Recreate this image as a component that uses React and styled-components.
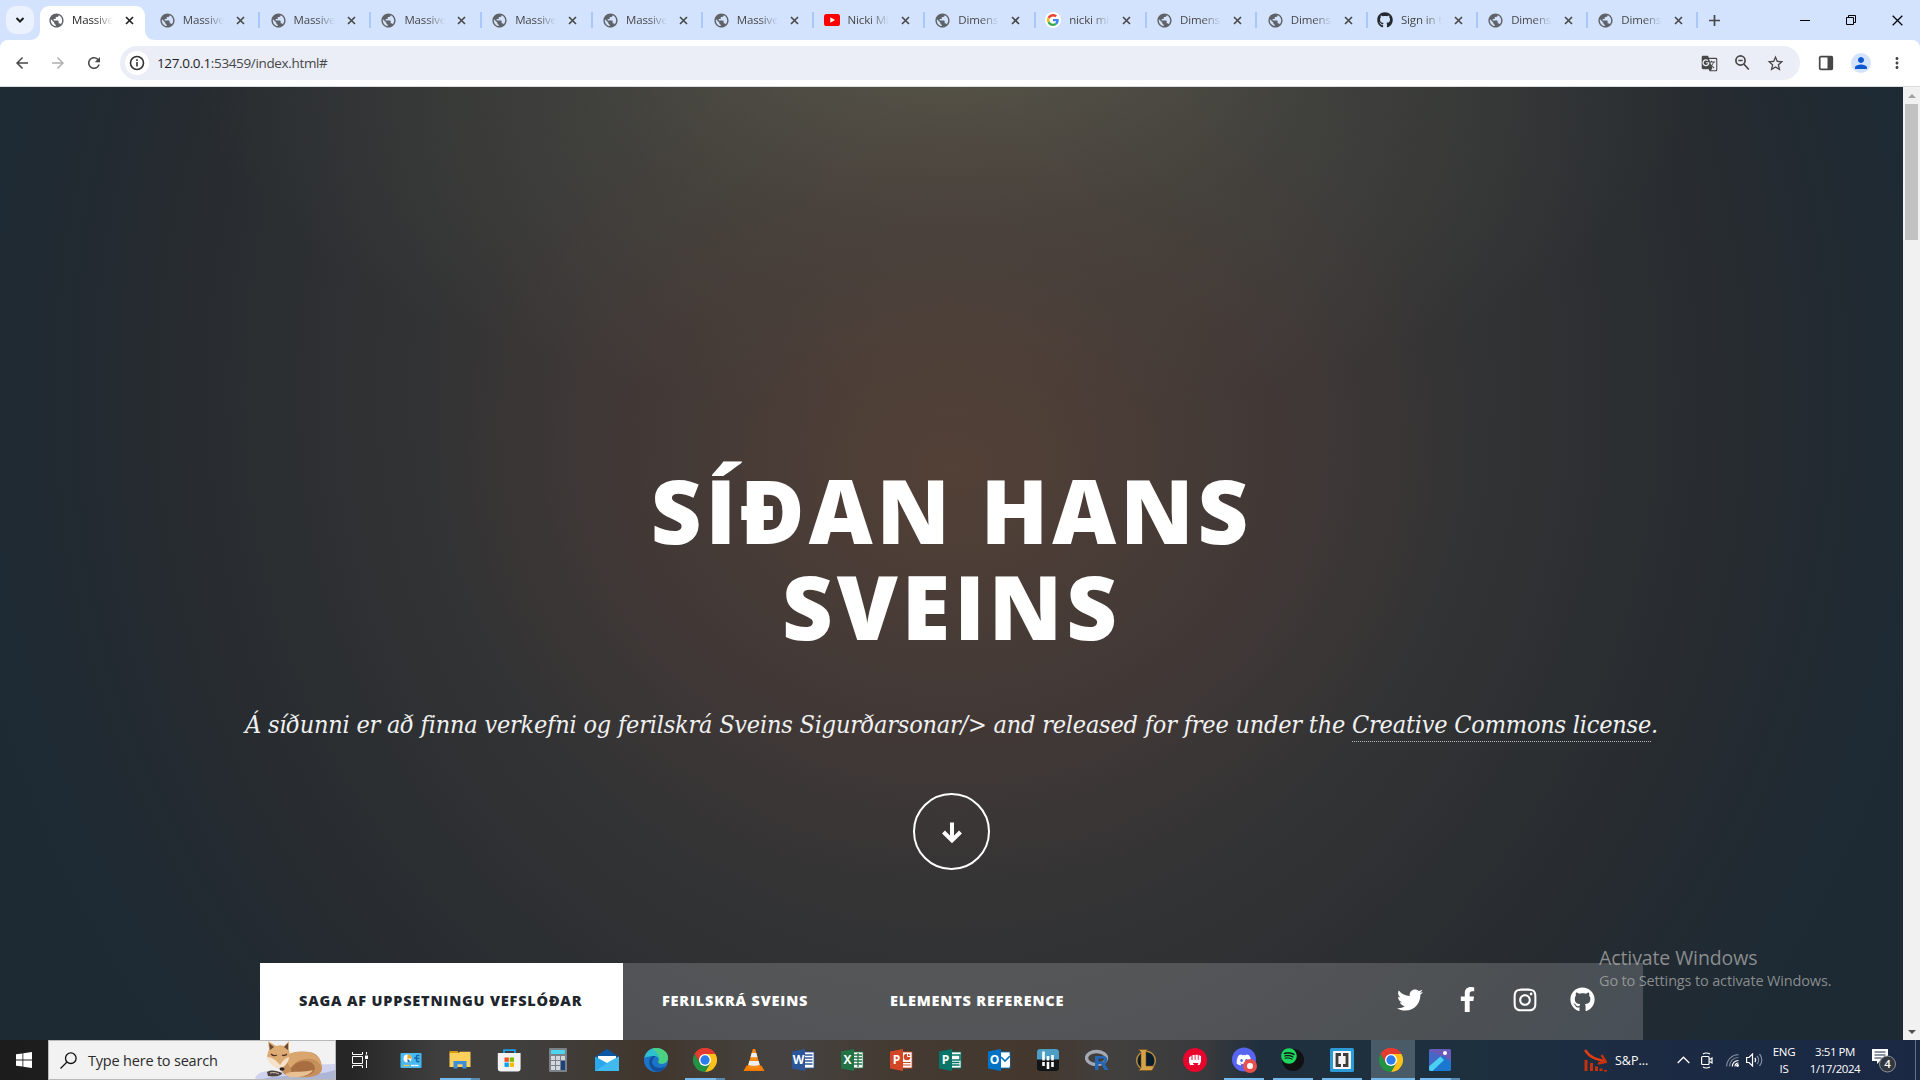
import React from "react";
import styled, { createGlobalStyle } from "styled-components";
import { FaTwitter, FaFacebookF, FaInstagram, FaGithub, FaSpotify, FaDiscord } from "react-icons/fa";
import {
  MdPublic, MdArrowBack, MdArrowForward, MdRefresh, MdGTranslate, MdStarBorder, MdPerson, MdMoreVert,
} from "react-icons/md";

const ui = `"Open Sans", "Noto Sans", sans-serif`;

const Global = createGlobalStyle`
  * { box-sizing: border-box; }
  html, body { margin: 0; padding: 0; overflow: hidden; }
  svg { display: block; flex: none; }
`;

const Screen = styled.div`
  width: 1920px;
  height: 1080px;
  display: flex;
  flex-direction: column;
  overflow: hidden;
  font-family: ${ui};
`;

/* ---------- Tab strip ---------- */
const TabStrip = styled.div`
  height: 40px;
  flex: none;
  display: flex;
  align-items: stretch;
  background: #d3e3fd;
  padding-left: 6px;
`;
const TabSearch = styled.div`
  width: 28px;
  height: 28px;
  margin: 6px 3.6px 0 0;
  border-radius: 10px;
  background: #ebf2fe;
  display: grid;
  place-items: center;
`;
const Tab = styled.div`
  position: relative;
  width: ${(p) => p.$w || 110.7}px;
  flex: none;
  display: flex;
  align-items: center;
  padding: 0 0 0 11.4px;
  color: ${(p) => (p.$active ? "#1f1f1f" : "#474747")};
  z-index: 0;
  ${(p) => p.$sep && `
    &::after {
      content: "";
      position: absolute;
      right: -1px;
      top: 12px;
      width: 2px;
      height: 16px;
      background: #a8c7fa;
    }
  `}
`;
const ActiveShape = styled.svg`
  position: absolute;
  left: -7.6px;
  top: 6px;
  z-index: -1;
`;
const Favicon = styled.div`
  width: 16px;
  height: 16px;
  margin-left: -1px;
  flex: none;
  display: grid;
  place-items: center;
  border-radius: 50%;
  background: ${(p) => p.$bg || "transparent"};
`;
const TabTitle = styled.div`
  width: 41px;
  margin-left: 8px;
  overflow: hidden;
  white-space: nowrap;
  font-size: 11.5px;
  line-height: 18px;
  letter-spacing: -0.15px;
  mask-image: linear-gradient(90deg, #000 55%, transparent 100%);
`;
const CloseX = styled.svg`
  margin-left: 12px;
`;
const NewTab = styled.svg`
  margin: 15px 0 0 12px;
`;
const WindowButtons = styled.div`
  margin-left: auto;
  display: flex;
  align-items: center;
  gap: 36px;
  padding-right: 17px;
`;

/* ---------- Toolbar ---------- */
const ToolbarWrap = styled.div`
  height: 47px;
  flex: none;
  background: #d3e3fd;
`;
const Toolbar = styled.div`
  height: 47px;
  display: flex;
  align-items: center;
  background: #fff;
  border-radius: 8px 8px 0 0;
  border-bottom: 1px solid #dadce0;
  padding: 0 12px 0 13px;
  color: #474747;
`;
const NavButtons = styled.div`
  display: flex;
  gap: 18px;
  width: 107px;
  flex: none;
`;
const Omnibox = styled.div`
  width: 1680px;
  height: 34px;
  border-radius: 17px;
  background: #ebeef7;
  display: flex;
  align-items: center;
  padding: 0 15px 0 5px;
`;
const SiteInfo = styled.div`
  width: 24px;
  height: 24px;
  border-radius: 50%;
  background: #fff;
  display: grid;
  place-items: center;
`;
const Url = styled.div`
  flex: 1;
  margin-left: 8px;
  font-size: 13.5px;
  letter-spacing: ${(p) => p.$ls}px;
  line-height: 20px;
  color: #474747;
  white-space: nowrap;
`;
const Host = styled.span`
  color: #1f1f1f;
`;
const OmniActions = styled.div`
  display: flex;
  align-items: center;
  gap: 15px;
`;
const Avatar = styled.div`
  width: 20px;
  height: 20px;
  border-radius: 50%;
  background: #d3e3fd;
  color: #0b57d0;
  display: grid;
  place-items: center;
`;
const ToolbarEnd = styled.div`
  display: flex;
  align-items: center;
  gap: 17px;
  padding-left: 18px;
`;

/* ---------- Page ---------- */
const Viewport = styled.div`
  height: 953px;
  flex: none;
  display: flex;
`;
const Hero = styled.main`
  width: 1903px;
  height: 953px;
  display: flex;
  flex-direction: column;
  align-items: center;
  overflow: hidden;
  background:
    radial-gradient(ellipse 520px 420px at 50% 40%, rgba(96, 68, 52, 0.6), rgba(84, 60, 52, 0.32) 55%, transparent 100%),
    radial-gradient(ellipse 760px 360px at 50% -3%, rgba(96, 94, 78, 0.75), rgba(78, 80, 70, 0.42) 50%, transparent 100%),
    radial-gradient(ellipse 1000px 1050px at 50% 32%, #403c3a 0%, #3a3737 35%, #2f3133 60%, #262b30 80%, #1d2a34 100%);
`;
const Title = styled.h1`
  margin: 375px 0 0;
  font-family: "Open Sans", "Noto Sans", sans-serif;
  font-weight: 800;
  font-size: 88px;
  line-height: 96px;
  text-align: center;
  color: #fff;
  text-transform: uppercase;
`;
const TitleLine = styled.div`
  letter-spacing: ${(p) => p.$ls}px;
  white-space: nowrap;
`;
const Tagline = styled.p`
  margin: 49px 0 0;
  font-family: "DejaVu Serif Condensed", "DejaVu Serif", serif;
  font-stretch: condensed;
  font-style: italic;
  font-size: 25px;
  letter-spacing: -0.2px;
  line-height: 44px;
  white-space: nowrap;
  color: #f0f0f0;
`;
const License = styled.a`
  border-bottom: 1px dotted rgba(255, 255, 255, 0.65);
  padding-bottom: 2px;
`;
const ArrowButton = styled.div`
  margin-top: 46px;
  width: 77px;
  height: 77px;
  flex: none;
  border: 2px solid #fff;
  border-radius: 50%;
  display: grid;
  place-items: center;
`;
const NavBar = styled.nav`
  margin-top: auto;
  width: 1383px;
  height: 77px;
  flex: none;
  display: flex;
  background: rgba(255, 255, 255, 0.175);
`;
const NavItem = styled.a`
  width: ${(p) => p.$w}px;
  padding-left: 39px;
  line-height: 75px;
  font-weight: 800;
  font-size: 14.5px;
  letter-spacing: ${(p) => p.$ls}px;
  text-transform: uppercase;
  white-space: nowrap;
  color: ${(p) => (p.$active ? "#1e252d" : "#fff")};
  background: ${(p) => (p.$active ? "#fff" : "transparent")};
`;
const Social = styled.div`
  margin-left: auto;
  display: flex;
  align-items: center;
  padding: 0 48px 4px 0;
  color: #fff;
`;
const SocialIcon = styled.div`
  width: ${(p) => p.$w || 57.5}px;
  display: flex;
  justify-content: center;
`;
const Watermark = styled.div`
  position: absolute;
  left: 1599px;
  top: 944px;
  color: rgba(170, 170, 170, 0.78);
  white-space: nowrap;
`;
const WatermarkTitle = styled.div`
  font-size: 19.5px;
  line-height: 28px;
  letter-spacing: -0.1px;
`;
const WatermarkText = styled.div`
  font-size: 14.5px;
  line-height: 18px;
  letter-spacing: -0.15px;
`;

const Scrollbar = styled.div`
  width: 17px;
  height: 953px;
  background: #f1f1f1;
  display: flex;
  flex-direction: column;
  align-items: center;
`;
const ScrollArrow = styled.div`
  height: 17px;
  width: 17px;
  display: grid;
  place-items: center;
  color: ${(p) => p.$c};
`;
const Thumb = styled.div`
  width: 13px;
  height: 136px;
  background: #c1c1c1;
  margin-bottom: auto;
`;

/* ---------- Taskbar ---------- */
const Taskbar = styled.footer`
  height: 40px;
  flex: none;
  display: flex;
  background: linear-gradient(90deg, #1c1c1c 0, #262626 350px, #403f3f 440px, #403f3e 520px, #41362d 650px,
    #454341 780px, #443a32 890px, #44382e 1040px, #42403f 1110px, #393a3c 1205px, #1f2f3e 1262px,
    #1d303e 1480px, #1c2b42 1620px, #1a2844 1920px);
`;
const StartButton = styled.div`
  width: 48px;
  display: grid;
  place-items: center;
`;
const SearchBox = styled.div`
  width: 288px;
  border: 1px solid #b9b9b9;
  background: #f2f2f2;
  display: flex;
  align-items: center;
  padding-left: 11px;
  overflow: hidden;
`;
const SearchText = styled.div`
  margin-left: 11px;
  width: 167px;
  flex: none;
  font-size: 14.5px;
  letter-spacing: ${(p) => p.$ls}px;
  color: #2b2b2b;
  white-space: nowrap;
`;
const TaskView = styled.div`
  width: 50.5px;
  padding-left: 16px;
  display: flex;
  align-items: center;
`;
const AppButton = styled.div`
  width: 49px;
  flex: none;
  display: grid;
  place-items: center;
  border-bottom: 2px solid transparent;
  padding-top: 2px;
  position: relative;
  background: ${(p) => (p.$active ? "linear-gradient(90deg, transparent 4px, #4a5b68 4px, #4a5b68 48px, transparent 48px)" : "transparent")};
`;
const Running = styled.div`
  position: absolute;
  left: ${(p) => (p.$active ? 4 : 4.5)}px;
  bottom: -2px;
  width: ${(p) => (p.$active ? 44 : 40)}px;
  height: 2px;
  background: ${(p) => (p.$split ? "linear-gradient(90deg, #76b9ed 31px, #5a8ab0 31px)" : "#76b9ed")};
`;
const Tray = styled.div`
  margin-left: auto;
  width: 336px;
  display: flex;
  align-items: center;
  color: #fff;
`;
const TrayCell = styled.div`
  width: ${(p) => p.$w}px;
  flex: none;
  display: flex;
  flex-direction: column;
  align-items: ${(p) => p.$align || "flex-start"};
  font-size: ${(p) => p.$size || 12}px;
  line-height: 17px;
  letter-spacing: ${(p) => p.$ls || 0}px;
  white-space: nowrap;
`;
const ShowDesktop = styled.div`
  width: 5px;
  height: 40px;
  margin-left: auto;
  border-left: 1px solid #66748a;
`;

/* ---------- Drawings ---------- */
const Chrome = ({ s = 24 }) => (
  <svg width={s} height={s} viewBox="0 0 48 48">
    <path d="M24 24 3.2 12A24 24 0 0 1 44.8 12z" fill="#ea4335" />
    <path d="M24 0A24 24 0 0 1 44.8 12H24L13.6 30 3.2 12A24 24 0 0 1 24 0z" fill="#e33b2e" />
    <path d="M44.8 12A24 24 0 0 1 24 48L34.4 30 24 12z" fill="#fbc116" />
    <path d="M3.2 12A24 24 0 0 0 24 48L34.4 30H13.6z" fill="#229342" />
    <circle cx="24" cy="24" r="12" fill="#fff" />
    <circle cx="24" cy="24" r="9.3" fill="#2b7de9" />
  </svg>
);
const Google = () => (
  <svg width="12" height="12" viewBox="0 0 48 48">
    <path fill="#EA4335" d="M24 9.5c3.5 0 6.700 1.200 9.200 3.600l6.900-6.900C35.900 2.400 30.500 0 24 0 14.600 0 6.500 5.400 2.600 13.200l8 6.200C12.400 13.700 17.700 9.500 24 9.500z" />
    <path fill="#4285F4" d="M47 24.600c0-1.600-.2-3.100-.4-4.600H24v9h12.900c-.6 3-2.200 5.500-4.800 7.200l7.700 6C44.400 38 47 32 47 24.600z" />
    <path fill="#FBBC05" d="M10.500 28.600a14.500 14.500 0 0 1 0-9.200l-8-6.200a24 24 0 0 0 0 21.600z" />
    <path fill="#34A853" d="M24 48c6.500 0 11.900-2.100 15.900-5.800l-7.700-6c-2.200 1.500-4.900 2.300-8.200 2.300-6.300 0-11.600-4.200-13.500-9.900l-8 6.200C6.500 42.600 14.600 48 24 48z" />
  </svg>
);
const YouTube = () => (
  <svg width="16" height="12" viewBox="0 0 16 12">
    <rect width="16" height="12" rx="2.600" fill="#f00" />
    <path d="M6.300 3.300v5.400L11 6z" fill="#fff" />
  </svg>
);
const Cross = ({ s = 8, w = 1.6, c = "currentColor" }) => (
  <svg width={s} height={s} viewBox="0 0 8 8"><path d="M.5.500l7 7M7.500.5l-7 7" stroke={c} strokeWidth={w} /></svg>
);

const OfficeIcon = ({ letter, color, dark, kind }) => (
  <svg width="24" height="24" viewBox="0 0 24 24">
    <rect x="12" y="4" width="11" height="16" fill="#fff" stroke={color} strokeWidth=".8" />
    {kind === "lines" && <path d="M14 7h7.500M14 10h7.500M14 13h7.500M14 16h7.500" stroke={color} strokeWidth="1.400" />}
    {kind === "grid" && <path d="M14 7h8M14 10h8M14 13h8M14 16h8M18 5v14" stroke={color} strokeWidth="1.300" />}
    {kind === "chart" && <><circle cx="18" cy="9" r="3.300" fill={color} /><path d="M18.500 5v3.500H22M14 15h7.500M14 17.500h7.500" stroke="#fff" strokeWidth="1" fill="none" /><path d="M14 14.500h7.500M14 17h7.500" stroke={color} strokeWidth="1.200" /></>}
    {kind === "pub" && <path d="M14 7h8v5h-8M14 14.500h7.500M14 17h7.500" stroke={color} strokeWidth="1.500" fill="none" />}
    {kind === "mail" && <><path d="M13 7h10v11H13z" fill="#fff" /><path d="M14 9l4 4 5-5" stroke={color} strokeWidth="1.600" fill="none" /></>}
    <path d="M1 3.500 14 1v22L1 20.500z" fill={dark} />
    <text x="7.500" y="16.300" fill="#fff" fontFamily="Open Sans, sans-serif" fontWeight="700" fontSize="12" textAnchor="middle">{letter}</text>
  </svg>
);

const Svg = ({ children }) => <svg width="24" height="24" viewBox="0 0 24 24">{children}</svg>;

const Panel = () => (
  <Svg>
    <rect x="1.500" y="5" width="21" height="15" rx="1" fill="#49b9f2" />
    <circle cx="8.500" cy="10.500" r="4" fill="#fff" /><path d="M8.500 10.500V6.500a4 4 0 0 1 4 4z" fill="#f5a623" />
    <path d="M8.500 10.500l2.800 2.800A4 4 0 0 1 8.500 14.500z" fill="#2474b8" />
    <path d="M15 10h2.500M17.500 7.500h3M17.500 10.500h3M17.500 13.500h3M17.500 7.500v6" stroke="#1467a8" strokeWidth="1.400" fill="none" />
    <path d="M4.500 17.500h6" stroke="#f5c443" strokeWidth="1.300" /><path d="M12 17.500h7.500" stroke="#fff" strokeWidth="1.300" />
  </Svg>
);
const Explorer = () => (
  <Svg>
    <path d="M1.500 3h8l1.500 2.500h-9.500z" fill="#d99a0b" />
    <path d="M1.500 5h9l1.500-1.200h10.500V19h-21z" fill="#ffd15c" />
    <path d="M5.500 20.500v-7.500h13v7.500h-4v-4.200h-5v4.200z" fill="#3c8fd9" />
  </Svg>
);
const Store = () => (
  <Svg>
    <path d="M7 6V2.200h11V6" fill="none" stroke="#1fa0ea" strokeWidth="1.800" />
    <path d="M.8 5h22.800v15.500a3 3 0 0 1-3 3H3.800a3 3 0 0 1-3-3z" fill="#f3f3f3" />
    <rect x="7.500" y="9.500" width="4.300" height="4.300" fill="#f25022" /><rect x="12.700" y="9.500" width="4.300" height="4.300" fill="#7fba00" />
    <rect x="7.500" y="14.600" width="4.300" height="4.300" fill="#00a4ef" /><rect x="12.700" y="14.600" width="4.300" height="4.300" fill="#ffb900" />
  </Svg>
);
const Calculator = () => (
  <Svg>
    <rect x="3" y="0" width="18" height="24" rx="1" fill="#7b8189" />
    <rect x="5" y="2" width="14" height="4" fill="#4fd4ef" />
    {[8, 13, 18].map((y) => [5, 10].map((x) => <rect key={x + "-" + y} x={x} y={y} width="4" height="4" fill="#d4d8dc" />))}
    <rect x="15" y="8" width="4" height="4" fill="#d4d8dc" /><rect x="15" y="13" width="4" height="9" fill="#18437e" />
  </Svg>
);
const Mail = () => (
  <Svg>
    <path d="M0 9 12 .8 24 9v3H0z" fill="#0b57a3" />
    <path d="M3 8h18v9H3z" fill="#fff" />
    <path d="M0 8.500 12 15 24 8.500V23H0z" fill="#2aa7ec" /><path d="M0 23 15.500 13 24 8.500V23z" fill="#4cc2f5" opacity=".7" />
  </Svg>
);
const Edge = () => (
  <Svg>
    <circle cx="12" cy="12" r="12" fill="#1c74c8" />
    <path d="M.4 10C1.500 4 6 0 12 0c7 0 12 4.500 12 9.800 0 3.700-2.700 6-6.200 6-2.500 0-4-1-3.300-2.300.9-1.700.4-5.300-4-5.500C6 7.700 2 9 .4 10z" fill="#2fc0d0" />
    <path d="M12 0c7 0 12 4.500 12 9.800 0 3.700-2.700 6-6.200 6-2.500 0-4-1-3.300-2.300C16.500 9 14 4 8 .7 9.200.2 10.600 0 12 0z" fill="#52d66b" opacity=".8" />
    <path d="M8 14.500c0-3 1.600-5.300 3.600-6.300-2.500-.6-6 .8-6.300 5.300C5 19 9 23.500 14 23.800c3.500-.6 6-2.600 7.800-5.300-5.300 2.500-12.300 2-13.800-4z" fill="#124e9a" />
  </Svg>
);
const Vlc = () => (
  <Svg>
    <path d="M4.500 17.500h15L22.500 23h-21z" fill="#f57c00" />
    <path d="M10.800 1h2.400l5.300 18.500c-2 2-11 2-13 0z" fill="#f58a16" />
    <path d="M9.700 5h4.600l1.200 4.300H8.500zM7.300 13h9.400l1 3.700c-2 1.500-9.400 1.500-11.400 0z" fill="#eceff1" />
  </Svg>
);
const Deezer = () => (
  <Svg>
    <rect x="1" y="1" width="22" height="22" rx="3" fill="#111517" /><path d="M1 11.500V4a3 3 0 0 1 3-3h16a3 3 0 0 1 3 3v7.500z" fill="#4d9ec5" />
    <path d="M7.500 3.500v9M12 8v4.500M16.500 7v5.500M7.500 14v4M12 14v7M16.500 14v5" stroke="#fff" strokeWidth="2.600" />
  </Svg>
);
const RLogo = () => (
  <Svg>
    <ellipse cx="11.500" cy="10" rx="10" ry="6.500" fill="none" stroke="#a3a8b2" strokeWidth="3.400" />
    <path d="M10 8h8.500a3.700 3.700 0 0 1 1.200 7.200L23.500 22h-4l-3.300-6H13.500v6H10zm3.500 2.600v2.900H18c1.800 0 1.800-2.900 0-2.900z" fill="#2467b5" />
  </Svg>
);
const League = () => (
  <Svg>
    <circle cx="12" cy="12.500" r="9.300" fill="#0a1d2c" stroke="#b58a3d" strokeWidth="1.500" />
    <path d="M4.500 1.500h9L12 4v14h8.500L18 22.500H4.500L7 20V4z" fill="#d5a24a" stroke="#6b4a16" strokeWidth=".6" />
  </Svg>
);
const Fist = () => (
  <Svg>
    <circle cx="12" cy="12" r="12" fill="#e8052d" />
    <path d="M6 9.500 8.500 7.500v4.500h1V7h2.200v5h.8V6.700h2.300V12h.8V7l2.400 1v5.500L16.500 17h-2l1-2H12l-1.500 2H7l-1-3z" fill="#fff" />
    <path d="M10 15.500h4" stroke="#e8052d" />
  </Svg>
);
const DiscordIcon = () => (
  <svg width="26" height="26" viewBox="0 0 26 26">
    <circle cx="13" cy="12.500" r="12" fill="#5865f2" />
    <FaDiscord x="5" y="5" width="15" height="14" color="#fff" />
    <circle cx="19" cy="19" r="7" fill="#e8504f" /><circle cx="19" cy="19" r="3" fill="#fff" />
  </svg>
);
const SpotifyIcon = () => (
  <Svg><circle cx="12" cy="12" r="11" fill="#111" /><FaSpotify width="24" height="24" color="#1ed760" /></Svg>
);
const Brackets = () => (
  <Svg>
    <rect width="24" height="24" rx="1.500" fill="#2a9bd6" /><rect x="3" y="3" width="18" height="18" rx="1" fill="#f5f5f5" />
    <path d="M11 6.500H7v11h4M13 6.500h4v11h-4" fill="none" stroke="#3d3d3d" strokeWidth="2.800" />
  </Svg>
);
const Photos = () => (
  <Svg>
    <rect x="1" y="1" width="22" height="22" rx="2" fill="#4468c8" /><path d="M1 3a2 2 0 0 1 2-2h18a2 2 0 0 1 2 2v9z" fill="#6a5ab8" />
    <path d="M1 19 13 8.500a2 2 0 0 1 2.500 0L23 15v6a2 2 0 0 1-2 2H3a2 2 0 0 1-2-2z" fill="#1c78cf" />
    <path d="M1 18.500 12.500 8.500 16 12 4.500 23H3a2 2 0 0 1-2-2z" fill="#4cd0f2" /><circle cx="17" cy="5" r="2" fill="#fff" />
  </Svg>
);

const Fox = () => (
  <svg width="80" height="38" viewBox="0 0 80 38">
    <path d="M0 38C3 29 14 30 24 31 40 26 60 23 80 23v15z" fill="#cfd3ee" />
    <path d="M8 38c14-5 50-1 72-9v9z" fill="#adb7d5" />
    <path d="M28 18C31 12 45 10 54 11 64 12 67 21 67 28c-1 8-14 9-24 8-10 0-14-2-16-6z" fill="#c68f5b" />
    <path d="M32 14c6-4 14-4 21-3 8 1 13 7 14 16-3-7-9-10-16-9-7 0-12 4-15 9-3-2-5-8-4-13z" fill="#d9a66d" />
    <path d="M36 27c5-7 15-9 21-5 6 5 2 12-8 13-8 0-14-2-13-8z" fill="#a86d40" />
    <path d="M30 33c8-4 20-1 28-4-3 6-15 8-24 7z" fill="#e7c193" />
    <path d="M14 8 13 0l8 5c3-1 6-1 8 0l5-5v9c2 6-1 12-8 19-6-1-13-8-14-13z" fill="#ddac74" />
    <path d="M14 2l5 4-4 3zM33 2l-4 4 4 3z" fill="#6b4a35" />
    <path d="M12 16c3 8 9 11 14 12 6-4 8-9 8-12-3 1-6 3-9 8-4-5-8-8-13-8z" fill="#f4e3ca" />
    <path d="M16 13c2 2 4 2 6 1M27 14c2 1 4 0 5-1" stroke="#4a3226" strokeWidth="1.300" fill="none" />
    <ellipse cx="27" cy="28" rx="2.500" ry="1.700" fill="#2a2322" />
    <path d="M12 31c5-3 10-1 15 1 0 3-8 4-14 3z" fill="#4d423e" /><path d="M15 32c4-1 7 0 9 1" stroke="#d5c9c0" fill="none" />
  </svg>
);

const g = "globe";
const tabs = [
  [g, "Massive"], [g, "Massive"], [g, "Massive"], [g, "Massive"], [g, "Massive"], [g, "Massive"], [g, "Massive"],
  ["yt", "Nicki Mi"], [g, "Dimensi"], ["google", "nicki min"], [g, "Dimensi"], [g, "Dimensi"], ["gh", "Sign in to"],
  [g, "Dimensi"], [g, "Dimensi"],
];
const favicons = {
  globe: <MdPublic size={17} color="#5f6368" />,
  yt: <YouTube />,
  google: <Google />,
  gh: <FaGithub size={16} color="#24292f" />,
};

const apps = [
  { i: <Panel /> },
  { i: <Explorer />, run: true, split: true },
  { i: <Store /> },
  { i: <Calculator /> },
  { i: <Mail /> },
  { i: <Edge /> },
  { i: <Chrome />, run: true, split: true },
  { i: <Vlc /> },
  { i: <OfficeIcon letter="W" color="#2b579a" dark="#2b579a" kind="lines" /> },
  { i: <OfficeIcon letter="X" color="#217346" dark="#217346" kind="grid" /> },
  { i: <OfficeIcon letter="P" color="#d24726" dark="#d24726" kind="chart" /> },
  { i: <OfficeIcon letter="P" color="#077568" dark="#077568" kind="pub" /> },
  { i: <OfficeIcon letter="O" color="#0072c6" dark="#0072c6" kind="mail" /> },
  { i: <Deezer /> },
  { i: <RLogo /> },
  { i: <League /> },
  { i: <Fist /> },
  { i: <DiscordIcon />, run: true },
  { i: <SpotifyIcon />, run: true },
  { i: <Brackets />, run: true },
  { i: <Chrome />, run: true, active: true },
  { i: <Photos />, run: true, split: true },
];

export default function App() {
  return (
    <Screen>
      <Global />
      <TabStrip>
        <TabSearch>
          <svg width="10" height="8" viewBox="0 0 10 8"><path d="M1.500 2 5 5.500 8.500 2" fill="none" stroke="#1f1f1f" strokeWidth="2" /></svg>
        </TabSearch>
        {tabs.map(([icon, title], i) => (
          <Tab key={i} $active={i === 0} $sep={i > 0} $w={i > 10 ? 110.2 : 110.8}>
            {i === 0 && (
              <ActiveShape width="125" height="34" viewBox="0 0 125 34">
                <path d="M0 34c6 0 10-4 10-10V10C10 4 14 0 20 0h85c6 0 10 4 10 10v14c0 6 4 10 10 10z" fill="#fff" />
              </ActiveShape>
            )}
            <Favicon $bg={icon === "google" ? "#fff" : undefined}>{favicons[icon]}</Favicon>
            <TabTitle>{title}</TabTitle>
            <CloseX width="9" height="9" viewBox="0 0 9 9"><path d="M1 1l7 7M8 1 1 8" stroke={i ? "#474747" : "#1f1f1f"} strokeWidth="1.600" /></CloseX>
          </Tab>
        ))}
        <NewTab width="11" height="11" viewBox="0 0 11 11"><path d="M5.500 0v11M0 5.500h11" stroke="#474747" strokeWidth="1.700" /></NewTab>
        <WindowButtons>
          <svg width="10" height="10"><path d="M0 5.500h10" stroke="#000" /></svg>
          <svg width="10" height="10"><path d="M.5 2.500h7v7h-7zM2.500 2.500v-2h7v7h-2" fill="none" stroke="#000" /></svg>
          <Cross s={11} w={0.9} c="#000" />
        </WindowButtons>
      </TabStrip>

      <ToolbarWrap>
        <Toolbar>
          <NavButtons>
            <MdArrowBack size={18} />
            <MdArrowForward size={18} color="#b0b0b0" />
            <MdRefresh size={18} />
          </NavButtons>
          <Omnibox>
            <SiteInfo>
              <svg width="16" height="16" viewBox="0 0 16 16"><circle cx="8" cy="8" r="6.500" fill="none" stroke="#333" strokeWidth="1.600" /><path d="M8 7v4.500M8 4.300v1.700" stroke="#333" strokeWidth="1.600" /></svg>
            </SiteInfo>
            <Url $ls={-0.35}><Host>127.0.0.1</Host>:53459/index.html#</Url>
            <OmniActions>
              <MdGTranslate size={17} />
              <svg width="18" height="18" viewBox="0 0 18 18"><circle cx="7.500" cy="6.500" r="4.600" fill="none" stroke="#474747" strokeWidth="1.700" /><path d="M5.300 6.500h4.400M10.800 10l5 5.500" stroke="#474747" strokeWidth="1.700" /></svg>
              <MdStarBorder size={19} />
            </OmniActions>
          </Omnibox>
          <ToolbarEnd>
            <svg width="16" height="16" viewBox="0 0 16 16"><rect x="1.700" y="1.700" width="12.600" height="12.600" rx="1" fill="none" stroke="#474747" strokeWidth="1.700" /><path d="M9.500 1.500h5v13h-5z" fill="#474747" /></svg>
            <Avatar><MdPerson size={18} /></Avatar>
            <MdMoreVert size={18} />
          </ToolbarEnd>
        </Toolbar>
      </ToolbarWrap>

      <Viewport>
        <Hero>
          <Title>
            <TitleLine $ls={4}>Síðan hans</TitleLine>
            <TitleLine $ls={4}>Sveins</TitleLine>
          </Title>
          <Tagline>
            Á síðunni er að finna verkefni og ferilskrá Sveins Sigurðarsonar/&gt; and released for free under the{" "}
            <License>Creative Commons license</License>.
          </Tagline>
          <ArrowButton>
            <svg width="24" height="24" viewBox="0 0 24 24"><path d="M12 2.500V20M3.500 12l8.500 8.500L20.500 12" fill="none" stroke="#fff" strokeWidth="4" strokeLinejoin="miter" /></svg>
          </ArrowButton>
          <NavBar>
            <NavItem $active $w={363} $ls={0.8}>Saga af uppsetningu vefslóðar</NavItem>
            <NavItem $w={228} $ls={0.8}>Ferilskrá Sveins</NavItem>
            <NavItem $w={260} $ls={0.8}>Elements Reference</NavItem>
            <Social>
              <SocialIcon $w={26}><FaTwitter size={26} /></SocialIcon>
              <SocialIcon $w={89}><FaFacebookF size={25} /></SocialIcon>
              <SocialIcon $w={26}><FaInstagram size={26} /></SocialIcon>
              <SocialIcon $w={26} style={{ marginLeft: 31 }}><FaGithub size={25} /></SocialIcon>
            </Social>
          </NavBar>
        </Hero>
        <Scrollbar>
          <ScrollArrow $c="#a3a3a3"><svg width="8" height="4"><path d="M0 4 4 0l4 4z" fill="currentColor" /></svg></ScrollArrow>
          <Thumb />
          <ScrollArrow $c="#505050"><svg width="8" height="4"><path d="M0 0l4 4 4-4z" fill="currentColor" /></svg></ScrollArrow>
        </Scrollbar>
      </Viewport>
      <Watermark>
        <WatermarkTitle>Activate Windows</WatermarkTitle>
        <WatermarkText>Go to Settings to activate Windows.</WatermarkText>
      </Watermark>

      <Taskbar>
        <StartButton>
          <svg width="16" height="16" viewBox="0 0 16 16"><path d="M0 2.300 6.500 1.400v6.200H0zM7.300 1.300 16 0v7.600H7.300zM0 8.400h6.500v6.200L0 13.700zM7.300 8.400H16V16l-8.700-1.300z" fill="#fff" /></svg>
        </StartButton>
        <SearchBox>
          <svg width="17" height="17" viewBox="0 0 17 17"><circle cx="10.800" cy="6.200" r="5.300" fill="none" stroke="#111" strokeWidth="1.300" /><path d="M7 10 .5 16.500" stroke="#111" strokeWidth="1.300" /></svg>
          <SearchText $ls={-0.2}>Type here to search</SearchText>
          <Fox />
        </SearchBox>
        <TaskView>
          <svg width="17" height="16" viewBox="0 0 17 16"><path d="M.5 0v2.500h10V0M.5 16v-2.500h10V16M.5 4.500h10v7H.5zM14.500 0v2.500M14.500 8v8" fill="none" stroke="#fff" /><rect x="13" y="3.500" width="3" height="3.500" fill="#fff" /></svg>
        </TaskView>
        {apps.map((a, i) => (
          <AppButton key={i} $active={a.active}>
            {a.i}
            {a.run && <Running $active={a.active} $split={a.split} />}
          </AppButton>
        ))}
        <Tray>
          <TrayCell $w={31}>
            <svg width="23" height="23" viewBox="0 0 23 23"><path d="M1 1c5 8 12 9.500 19 11" fill="none" stroke="#e23d11" strokeWidth="2.400" /><path d="M14 14.500 22 13 17.500 6" fill="none" stroke="#c5300d" strokeWidth="2.400" /><path d="M2 11v11M7.500 14v8M12.500 17.500V22M17 19.500V22M21.500 21v1.500" stroke="#c5300d" strokeWidth="3" /></svg>
          </TrayCell>
          <TrayCell $w={62} $size={12.500}>S&amp;P...</TrayCell>
          <TrayCell $w={24}>
            <svg width="13" height="8" viewBox="0 0 13 8"><path d="M.7 7 6.500 1.200 12.300 7" fill="none" stroke="#fff" strokeWidth="1.300" /></svg>
          </TrayCell>
          <TrayCell $w={25}>
            <svg width="12" height="17" viewBox="0 0 12 17"><rect x=".6" y="4.500" width="7.500" height="8" rx="1" fill="none" stroke="#fff" strokeWidth="1.200" /><path d="M8.500 7.500 11 6v5L8.500 9.500M2 2Q5 0 9 2M2 15q3 2 7 0" fill="none" stroke="#fff" strokeWidth="1.200" /></svg>
          </TrayCell>
          <TrayCell $w={20}>
            <svg width="13" height="13" viewBox="0 0 13 13"><g fill="none" strokeWidth="1.200"><path d="M.6 12.500A12 12 0 0 1 12.500.6M3.500 12.500a9 9 0 0 1 9-9" stroke="#7d8798" /><path d="M6.300 12.500a6 6 0 0 1 6.200-6M9 12.500A3.500 3.500 0 0 1 12.500 9" stroke="#fff" /></g><circle cx="11.500" cy="11.500" r="1.400" fill="#fff" /></svg>
          </TrayCell>
          <TrayCell $w={23}>
            <svg width="17" height="14" viewBox="0 0 17 14"><path d="M.6 4.500H3L6.500 1v12L3 9.500H.600z" fill="none" stroke="#fff" strokeWidth="1.200" /><path d="M8.800 5a3 3 0 0 1 0 4" fill="none" stroke="#fff" strokeWidth="1.200" /><path d="M11 3a6 6 0 0 1 0 8M13.500 1a9 9 0 0 1 0 12" fill="none" stroke="#8490a5" strokeWidth="1.200" /></svg>
          </TrayCell>
          <TrayCell $w={30} $align="center" $size={11.500} $ls={-0.3}><span>ENG</span><span>IS</span></TrayCell>
          <TrayCell $w={72} $align="center" $size={11.500} $ls={-0.45}><span>3:51 PM</span><span>1/17/2024</span></TrayCell>
          <TrayCell $w={26}>
            <svg width="26" height="26" viewBox="0 0 26 26"><path d="M1 2h16v12H9l-3 3v-3H1z" fill="#fff" /><path d="M3.500 5h11M3.500 8h11M3.500 11h7" stroke="#1a2844" /><circle cx="16.500" cy="17" r="8" fill="#33373f" stroke="#8d929a" strokeWidth="1" /><text x="16.500" y="21" fontSize="11.500" fontWeight="600" fontFamily="Open Sans, sans-serif" textAnchor="middle" fill="#fff">4</text></svg>
          </TrayCell>
          <ShowDesktop />
        </Tray>
      </Taskbar>
    </Screen>
  );
}
